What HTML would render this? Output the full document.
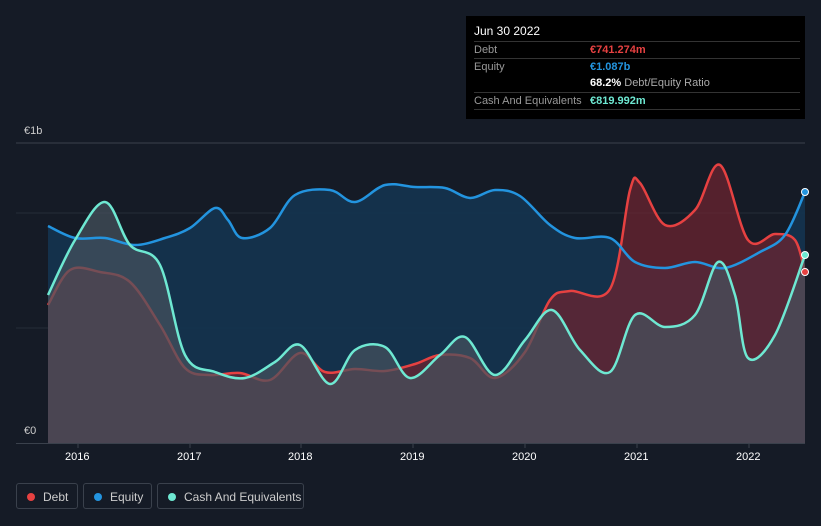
<!DOCTYPE html>
<html><head><meta charset="utf-8"><style>
body{margin:0;background:#151b26;width:821px;height:526px;overflow:hidden;font-family:"Liberation Sans",sans-serif;position:relative}
.tt{position:absolute;left:466px;top:16px;width:339px;height:103px;background:#000}
.tt .h{position:absolute;left:8px;top:8px;color:#fff;font-size:12px}
.row{position:absolute;left:8px;width:326px;border-top:1px solid #333;font-size:11px;color:#999;height:16px;line-height:17px}
.row span{position:absolute;left:116px;font-weight:bold}
.ax{position:absolute;color:#fff;font-size:11px}
.leg{position:absolute;top:483px;height:26px;border:1px solid #3a414c;border-radius:3px;color:#ccc;font-size:12px;line-height:26px;box-sizing:border-box}
.leg i{display:inline-block;width:8px;height:8px;border-radius:50%;margin:0 8px 0 10px;vertical-align:-0px}
</style></head><body>
<svg id="s" width="821" height="526" style="position:absolute;left:0;top:0">
<line x1="16" y1="143" x2="805" y2="143" stroke="#3a414c"/>
<line x1="16" y1="213" x2="805" y2="213" stroke="#252c38"/>
<line x1="16" y1="328" x2="805" y2="328" stroke="#252c38"/>
<path id="ef" fill="#143450" opacity="0.9"/>
<path id="df" fill="#6b2430" opacity="0.75"/>
<path id="dl" stroke="#e64141" fill="none" stroke-width="2.5"/>
<path id="cf" fill="#46535e" opacity="0.7"/>
<g fill="none" stroke-width="2.5" stroke-linejoin="round">
<path id="el" stroke="#2394df"/>
<path id="cl" stroke="#6ee8d2"/>
</g>
<circle cx="805" cy="192" r="3.5" fill="#2394df" stroke="#fff"/>
<circle cx="805" cy="272" r="3.5" fill="#e64141" stroke="#fff"/>
<circle cx="805" cy="255" r="3.5" fill="#6ee8d2" stroke="#fff"/>
<line x1="16" y1="443.5" x2="805" y2="443.5" stroke="#3a414c"/>
<g stroke="#3a414c"><line x1="78" y1="444" x2="78" y2="448"/><line x1="190" y1="444" x2="190" y2="448"/><line x1="301" y1="444" x2="301" y2="448"/><line x1="413" y1="444" x2="413" y2="448"/><line x1="525" y1="444" x2="525" y2="448"/><line x1="637" y1="444" x2="637" y2="448"/><line x1="749" y1="444" x2="749" y2="448"/></g>
</svg>
<script>
function sm(s){var p=s.trim().split(/\s+/).map(function(q){return q.split(',').map(Number)});var d='M'+p[0][0]+','+p[0][1];
for(var i=0;i<p.length-1;i++){var a=p[i-1]||p[i],b=p[i],c=p[i+1],e=p[i+2]||c;
var c1x=b[0]+(c[0]-a[0])/6,c1y=b[1]+(c[1]-a[1])/6,c2x=c[0]-(e[0]-b[0])/6,c2y=c[1]-(e[1]-b[1])/6;
d+=' C'+c1x.toFixed(1)+','+c1y.toFixed(1)+' '+c2x.toFixed(1)+','+c2y.toFixed(1)+' '+c[0]+','+c[1];}return d;}
var E="48,226 75,238 105,238 135,245 165,238 190,228 215,208 228,220 242,238 270,228 295,195 330,190 355,202 385,185 415,187 445,188 470,198 495,190 520,196 550,225 575,238 610,238 635,262 665,268 695,262 725,268 760,252 785,235 805,192";
var D="48,305 70,270 100,272 130,282 160,325 185,368 210,375 240,373 270,380 300,353 325,372 355,369 385,371 415,364 440,355 470,358 495,378 525,352 550,300 570,291 610,289 630,190 640,183 665,225 695,210 720,165 748,240 775,234 795,240 805,272";
var C="48,295 75,240 105,202 130,245 160,265 185,355 215,372 245,378 275,362 300,345 330,384 355,350 385,347 410,378 440,355 465,337 495,375 525,340 552,310 580,350 610,372 635,315 665,327 695,315 718,262 735,295 748,358 775,335 805,255";
[['e',E],['d',D],['c',C]].forEach(function(k){var d=sm(k[1]);document.getElementById(k[0]+'l').setAttribute('d',d);document.getElementById(k[0]+'f').setAttribute('d',d+' L805,443 L48,443 Z');});
</script>
<div class="ax" style="left:24px;top:125px;color:#ccc">€1b</div>
<div class="ax" style="left:24px;top:425px;color:#ccc">€0</div>
<div class="ax" style="left:65px;top:451px">2016</div>
<div class="ax" style="left:177px;top:451px">2017</div>
<div class="ax" style="left:288px;top:451px">2018</div>
<div class="ax" style="left:400px;top:451px">2019</div>
<div class="ax" style="left:512px;top:451px">2020</div>
<div class="ax" style="left:624px;top:451px">2021</div>
<div class="ax" style="left:736px;top:451px">2022</div>
<div class="tt">
<div class="h">Jun 30 2022</div>
<div class="row" style="top:25px">Debt<span style="color:#e64141">€741.274m</span></div>
<div class="row" style="top:42px">Equity<span style="color:#2394df">€1.087b</span></div>
<div class="row" style="top:59px;border-top:none"><span style="color:#fff">68.2% <b style="color:#aaa;font-weight:normal">Debt/Equity Ratio</b></span></div>
<div class="row" style="top:76px">Cash And Equivalents<span style="color:#6ee8d2">€819.992m</span></div>
<div class="row" style="top:93px;height:0"></div>
</div>
<div class="leg" style="left:16px;width:62px"><i style="background:#e64141"></i>Debt</div>
<div class="leg" style="left:83px;width:69px"><i style="background:#2394df"></i>Equity</div>
<div class="leg" style="left:157px;width:147px"><i style="background:#6ee8d2"></i>Cash And Equivalents</div>
</body></html>
